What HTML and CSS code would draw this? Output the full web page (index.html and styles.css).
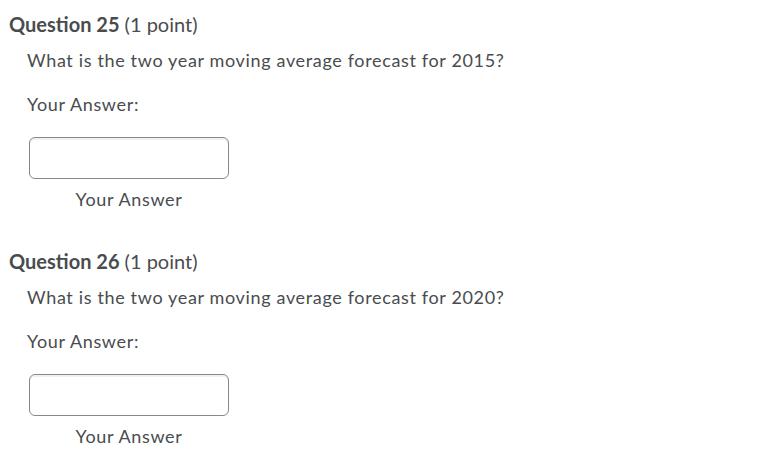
FILE: index.html
```html
<!DOCTYPE html>
<html>
<head>
<meta charset="utf-8">
<link rel="stylesheet" href="styles.css">
</head>
<body>
<div class="page">
  <section class="question">
    <h2 class="q-title"><strong>Question 25</strong> (1 point)</h2>
    <div class="q-body">
      <p class="q-text">What is the two year moving average forecast for 2015?</p>
      <p class="q-label">Your Answer:</p>
      <div class="answer">
        <input class="answer-input" type="text" aria-label="Your Answer">
        <div class="answer-caption">Your Answer</div>
      </div>
    </div>
  </section>
  <section class="question">
    <h2 class="q-title"><strong>Question 26</strong> (1 point)</h2>
    <div class="q-body">
      <p class="q-text">What is the two year moving average forecast for 2020?</p>
      <p class="q-label">Your Answer:</p>
      <div class="answer">
        <input class="answer-input" type="text" aria-label="Your Answer">
        <div class="answer-caption">Your Answer</div>
      </div>
    </div>
  </section>
</div>
</body>
</html>
```

FILE: styles.css
```css
html, body {
  margin: 0;
  padding: 0;
  background: #ffffff;
}

body {
  font-family: Lato, "Open Sans", "Liberation Sans", sans-serif;
  color: #494c4e;
}

.page {
  padding: 12px 0 0 9px;
}

.question {
  margin-bottom: 38px;
}

.question:last-child {
  margin-bottom: 0;
}

.q-title {
  margin: 0;
  font-size: 20px;
  line-height: 24px;
  font-weight: 400;
}

.q-title strong {
  font-weight: 700;
}

.q-body {
  padding-left: 18px;
}

.q-text,
.q-label,
.answer-caption {
  font-size: 18px;
  line-height: 24px;
  letter-spacing: 0.65px;
}

.q-text {
  margin: 12px 0 0;
}

.q-label {
  margin: 20px 0 0;
}

.answer {
  width: 200px;
  margin: 21px 0 0 2px;
  display: flex;
  flex-direction: column;
}

.answer-input {
  box-sizing: border-box;
  width: 200px;
  height: 42px;
  margin: 0;
  border: 1px solid #84898c;
  border-radius: 6px;
  box-shadow: inset 0 2px 0 0 rgba(177, 185, 190, 0.2);
  background: #ffffff;
  font: inherit;
  padding: 0 10px;
}

.answer-caption {
  margin-top: 8px;
  text-align: center;
}
```
